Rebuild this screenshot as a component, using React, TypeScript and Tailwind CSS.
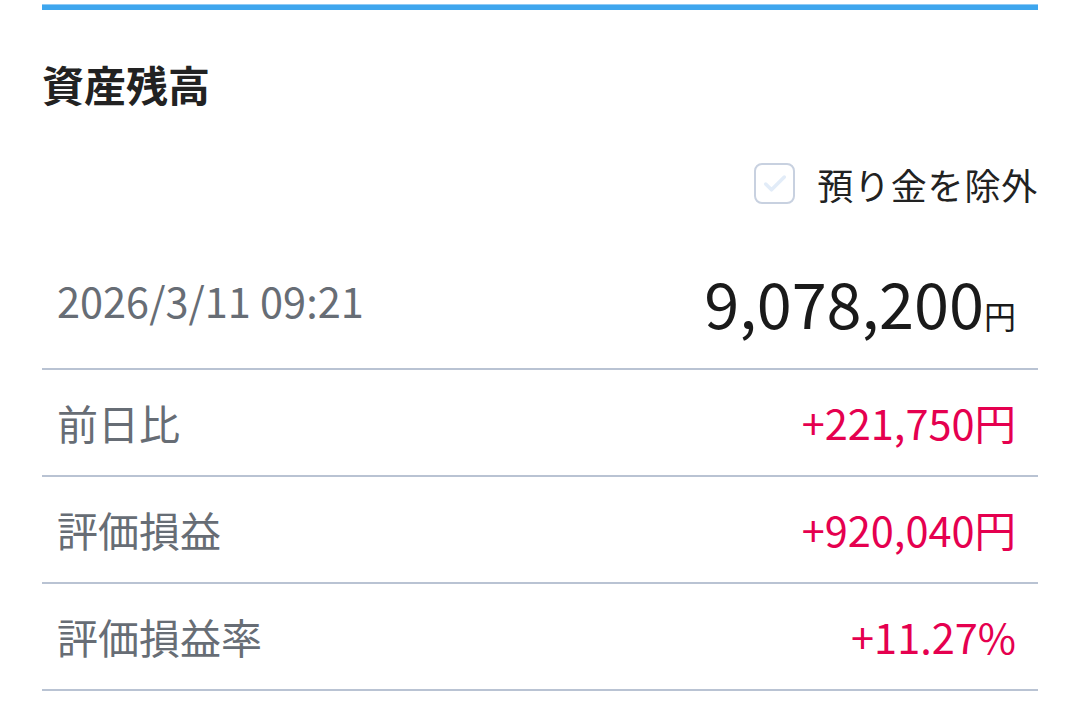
import { Check } from 'lucide-react'

const rows = [
  { label: '前日比', value: '+221,750円' },
  { label: '評価損益', value: '+920,040円' },
  { label: '評価損益率', value: '+11.27%' },
]

export default function App() {
  return (
    <div
      className="min-h-screen bg-white px-[42px] pt-[4px]"
      style={{ fontFamily: '"Noto Sans CJK JP", "Noto Sans", sans-serif' }}
    >
      {/* Top accent bar */}
      <div className="h-[6px] bg-[#3ea6ee] border-t border-[#8fcaf5]" />

      {/* Title */}
      <h1 className="mt-[53px] text-[42px] leading-[42px] font-bold text-[#222]">資産残高</h1>

      {/* Exclude deposits */}
      <div className="mt-[58px] flex justify-end items-center gap-[22px]">
        <div className="w-[41px] h-[41px] rounded-[8px] border-2 border-[#c8d1e0] flex items-center justify-center">
          <Check className="w-[28px] h-[28px] text-[#e2ecf8]" strokeWidth={3} />
        </div>
        <span className="text-[36px] leading-[40px] tracking-[0.8px] text-[#222]">預り金を除外</span>
      </div>

      {/* Total */}
      <div className="h-[166px] pt-[30px] border-b-2 border-[#b9c3d3] flex items-center justify-between pl-[15px] pr-[22px]">
        <span className="text-[41.5px] leading-none text-[#676d75]">2026/3/11 09:21</span>
        <span className="flex items-baseline text-[#1a1a1a]">
          <span className="text-[63px] leading-none">9,078,200</span>
          <span className="text-[32px] leading-none">円</span>
        </span>
      </div>

      {/* Detail rows */}
      {rows.map(r => (
        <div
          key={r.label}
          className="h-[107px] border-b-2 border-[#b9c3d3] flex items-center justify-between pl-[15px] pr-[22px]"
        >
          <span className="text-[41px] leading-none text-[#676d75]">{r.label}</span>
          <span className="text-[41.5px] leading-none text-[#e5004f]">{r.value}</span>
        </div>
      ))}
    </div>
  )
}
